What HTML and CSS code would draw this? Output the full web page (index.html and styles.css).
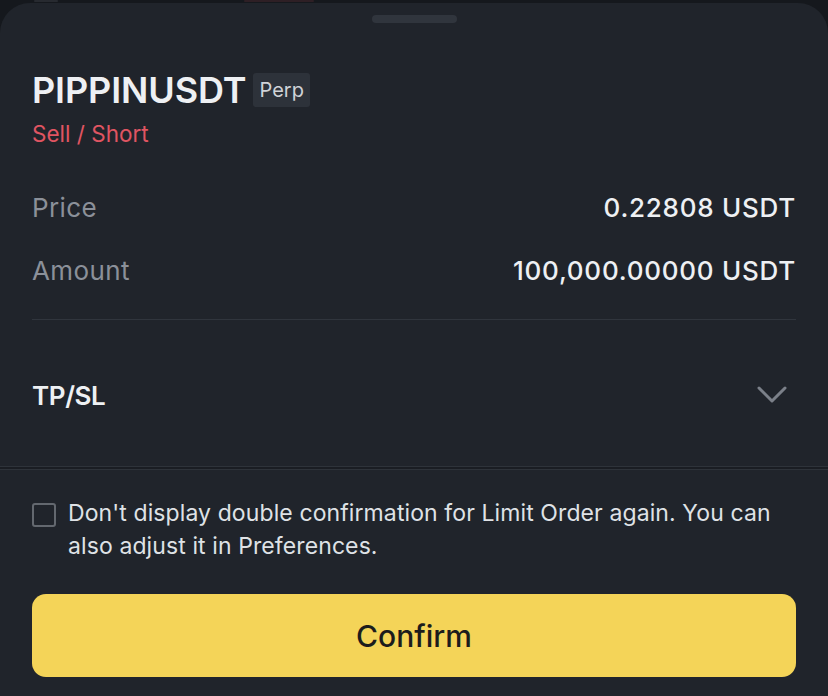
FILE: index.html
```html
<!DOCTYPE html>
<html lang="en">
<head>
<meta charset="utf-8">
<title>Order confirmation</title>
<link rel="stylesheet" href="styles.css">
</head>
<body>
<div class="backdrop">
  <span class="bg-mark gray"></span><span class="bg-mark red"></span>
</div>
<div class="sheet">
  <div class="handle"></div>
  <div class="content">
    <div class="title-row">
      <span class="symbol">PIPPINUSDT</span>
      <span class="badge">Perp</span>
    </div>
    <div class="side">Sell / Short</div>

    <div class="rows">
      <div class="row">
        <span class="label">Price</span>
        <span class="value">0.22808 USDT</span>
      </div>
      <div class="row">
        <span class="label">Amount</span>
        <span class="value">100,000.00000 USDT</span>
      </div>
    </div>

    <div class="divider"></div>

    <div class="tpsl">
      <span class="tpsl-label">TP/SL</span>
      <svg class="chevron" width="32" height="20" viewBox="0 0 32 20" fill="none">
        <path d="M3 3 L16 16 L29 3" stroke="#7b8089" stroke-width="3" stroke-linecap="round" stroke-linejoin="round"/>
      </svg>
    </div>
  </div>

  <div class="double-rule"></div>

  <div class="content">
    <label class="check">
      <span class="box"></span>
      <span class="check-text">Don't display double confirmation for Limit Order again. You can also adjust it in Preferences.</span>
    </label>

    <button class="confirm">Confirm</button>
  </div>
</div>
</body>
</html>
```

FILE: styles.css
```css
* { box-sizing: border-box; }

html, body {
  margin: 0;
  padding: 0;
  width: 828px;
  height: 696px;
  overflow: hidden;
  background: #15181d;
  font-family: "Inter", "Noto Sans", sans-serif;
}

.backdrop {
  height: 3px;
  display: flex;
  align-items: flex-start;
  padding-left: 34px;
  gap: 186px;
}

.bg-mark {
  height: 2px;
  border-radius: 1px;
}
.bg-mark.gray {
  width: 24px;
  background: #272a30;
}
.bg-mark.red {
  width: 70px;
  background: #2e1f25;
}

.sheet {
  height: 693px;
  background: #20242b;
  border-radius: 30px 30px 0 0;
  display: flex;
  flex-direction: column;
}

.handle {
  width: 85px;
  height: 8px;
  border-radius: 4px;
  background: #30353d;
  margin: 12px auto 0;
}

.content {
  padding: 0 32px;
}

.title-row {
  display: flex;
  align-items: center;
  gap: 7px;
  margin-top: 45px;
}

.symbol {
  font-size: 36px;
  font-weight: 600;
  color: #eef0f3;
  line-height: 44px;
  letter-spacing: -0.1px;
}

.badge {
  background: #2d323a;
  color: #d0d3d8;
  font-size: 20px;
  line-height: 34px;
  padding: 0 6px;
  border-radius: 3px;
}

.side {
  color: #e05562;
  font-size: 22.5px;
  line-height: 28px;
  margin-top: 8px;
}

.rows {
  margin-top: 44px;
  display: flex;
  flex-direction: column;
  gap: 31px;
}

.row {
  display: flex;
  justify-content: space-between;
  align-items: center;
  line-height: 32px;
}

.label {
  font-size: 26px;
  color: #8b9099;
  letter-spacing: 0.4px;
}

.value {
  font-size: 26px;
  font-weight: 500;
  color: #eef0f3;
  letter-spacing: 0.75px;
}

.divider {
  height: 1px;
  background: #30353d;
  margin-top: 32px;
}

.tpsl {
  display: flex;
  justify-content: space-between;
  align-items: center;
  height: 146px;
  padding: 4px 8px 0 0;
}

.tpsl-label {
  font-size: 26px;
  font-weight: 600;
  color: #eef0f3;
  letter-spacing: -0.4px;
}

.chevron { display: block; }

.double-rule {
  height: 4px;
  border-top: 1px solid #2e333a;
  border-bottom: 1px solid #2e333a;
  background: #1a1d23;
}

.check {
  display: flex;
  align-items: flex-start;
  gap: 12px;
  margin-top: 27px;
}

.box {
  flex: none;
  width: 24px;
  height: 24px;
  border: 2px solid #63686f;
  border-radius: 3px;
  margin-top: 6px;
}

.check-text {
  font-size: 23px;
  line-height: 33px;
  color: #dfe2e6;
  letter-spacing: 0.1px;
}

.confirm {
  display: block;
  width: 100%;
  height: 83px;
  margin-top: 31px;
  border: none;
  border-radius: 14px;
  background: #f4d458;
  color: #1c1c1c;
  font-family: "Inter", "Noto Sans", sans-serif;
  font-size: 30px;
  font-weight: 500;
}
```
